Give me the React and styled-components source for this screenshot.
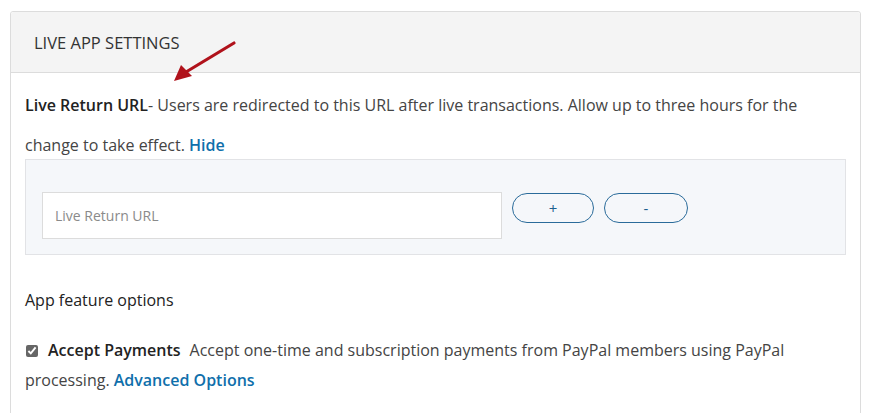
import React from 'react';
import styled, { createGlobalStyle } from 'styled-components';

const GlobalStyle = createGlobalStyle`
  body {
    margin: 0;
    background: #fff;
    font-family: "Open Sans", Lato, "Liberation Sans", sans-serif;
    color: #333;
  }
`

const Page = styled.div`
  position: relative;
  padding: 11px 21px 0 10px;
  height: 413px;
  box-sizing: border-box;
  overflow: hidden;
`

const Panel = styled.section`
  border: 1px solid #dcdcdc;
  border-radius: 3px;
  background: #fff;
  min-height: 420px;
`

const PanelHeader = styled.header`
  background: #f4f4f4;
  border-bottom: 1px solid #dcdcdc;
  height: 60px;
  display: flex;
  align-items: center;
  padding-left: 23px;
  font-size: 16.5px;
  color: #333;
  border-radius: 3px 3px 0 0;
`

const PanelBody = styled.div`
  padding: 12px 14px 0 14px;
`

const Intro = styled.p`
  margin: 0;
  font-size: 16px;
  line-height: 40px;
  color: #444;
`

const Strong = styled.strong`
  font-weight: 600;
  color: #222;
`

const Link = styled.a`
  color: #0f6fab;
  text-decoration: none;
  font-weight: ${p => (p.$bold ? 600 : 400)};
  cursor: pointer;
`

const UrlBox = styled.div`
  background: #f5f7fa;
  border: 1px solid #e2e3e6;
  height: 96px;
  margin-top: -6px;
  display: flex;
  align-items: flex-start;
  gap: 10px;
  padding: 32px 16px 0 16px;
  box-sizing: border-box;
`

const UrlInput = styled.input`
  width: 460px;
  height: 47px;
  box-sizing: border-box;
  border: 1px solid #dcdcdc;
  background: #fff;
  padding: 0 12px;
  font-family: inherit;
  font-size: 14px;
  color: #333;
  outline: none;
  &::placeholder {
    color: #8a8a8a;
  }
`

const PillButton = styled.button`
  width: ${p => p.$w}px;
  height: 30px;
  margin-top: 1px;
  border: 1px solid #2a6b9a;
  border-radius: 15px;
  background: transparent;
  color: #1d5f8f;
  font-family: inherit;
  font-size: 15px;
  line-height: 1;
  cursor: pointer;
`

const SectionTitle = styled.h3`
  margin: 33px 0 0 0;
  font-size: 16px;
  font-weight: 500;
  color: #222;
  line-height: 24px;
`

const Feature = styled.div`
  margin-top: 23px;
  font-size: 16px;
  line-height: 30px;
  color: #444;
`

const Check = styled.input`
  width: 12px;
  height: 12px;
  margin: 0 10px 0 1px;
  vertical-align: -1px;
  accent-color: #666;
`

const FeatureName = styled.span`
  font-weight: 600;
  color: #222;
  margin-right: 9px;
`

const Arrow = styled.svg`
  position: absolute;
  left: 168px;
  top: 38px;
`

export default function App() {
  return (
    <>
      <GlobalStyle />
      <Page>
        <Panel>
          <PanelHeader>LIVE APP SETTINGS</PanelHeader>
          <PanelBody>
            <Intro>
              <Strong>Live Return URL</Strong>- Users are redirected to this URL after live
              transactions. Allow up to three hours for the change to take effect.{' '}
              <Link $bold>Hide</Link>
            </Intro>
            <UrlBox>
              <UrlInput placeholder="Live Return URL" />
              <PillButton $w={82}>+</PillButton>
              <PillButton $w={84}>-</PillButton>
            </UrlBox>
            <SectionTitle>App feature options</SectionTitle>
            <Feature>
              <Check type="checkbox" defaultChecked />
              <FeatureName>Accept Payments</FeatureName>
              Accept one-time and subscription payments from PayPal members using PayPal
              processing. <Link $bold>Advanced Options</Link>
            </Feature>
          </PanelBody>
        </Panel>
        <Arrow width="72" height="50" viewBox="0 0 72 50">
          <line x1="66" y1="5" x2="18" y2="34" stroke="#b0121b" strokeWidth="3.2" strokeLinecap="round" />
          <polygon points="6,43 13,27 24,38" fill="#b0121b" />
        </Arrow>
      </Page>
    </>
  );
}
